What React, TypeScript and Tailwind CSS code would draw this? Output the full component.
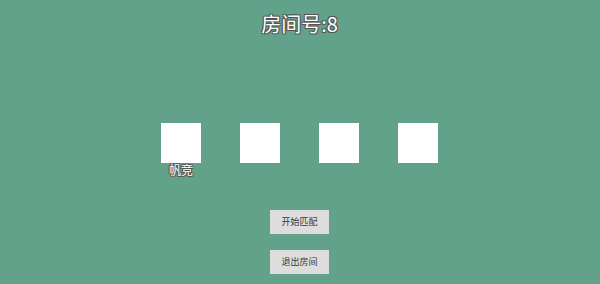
const SLOTS = ['帆竞', '', '', '']

export default function App() {
  return (
    <div className="flex h-[284px] w-full flex-col items-center bg-[#62a28b] pr-px font-['Noto_Sans_CJK_SC',sans-serif]">
      <h1 className="mt-[10px] text-[20px] leading-[28px] text-white [text-shadow:-1px_-1px_0_#555,1px_-1px_0_#555,-1px_1px_0_#555,1px_1px_0_#555]">
        房间号:8
      </h1>

      <div className="mt-[85px] flex items-start gap-[39px]">
        {SLOTS.map((name, i) => (
          <div key={i} className="flex w-10 flex-col items-center">
            <div className="h-10 w-10 bg-white" />
            <span className="h-[14px] whitespace-nowrap text-[12px] leading-[14px] text-white [text-shadow:-1px_-1px_0_#555,1px_-1px_0_#555,-1px_1px_0_#555,1px_1px_0_#555]">
              {name}
            </span>
          </div>
        ))}
      </div>

      <div className="mt-[33px] flex flex-col gap-4">
        <button type="button" className="h-6 w-[59px] bg-[#dddddd] text-[9px] text-[#3a3a3a]">
          开始匹配
        </button>
        <button type="button" className="h-6 w-[59px] bg-[#dddddd] text-[9px] text-[#3a3a3a]">
          退出房间
        </button>
      </div>
    </div>
  )
}
